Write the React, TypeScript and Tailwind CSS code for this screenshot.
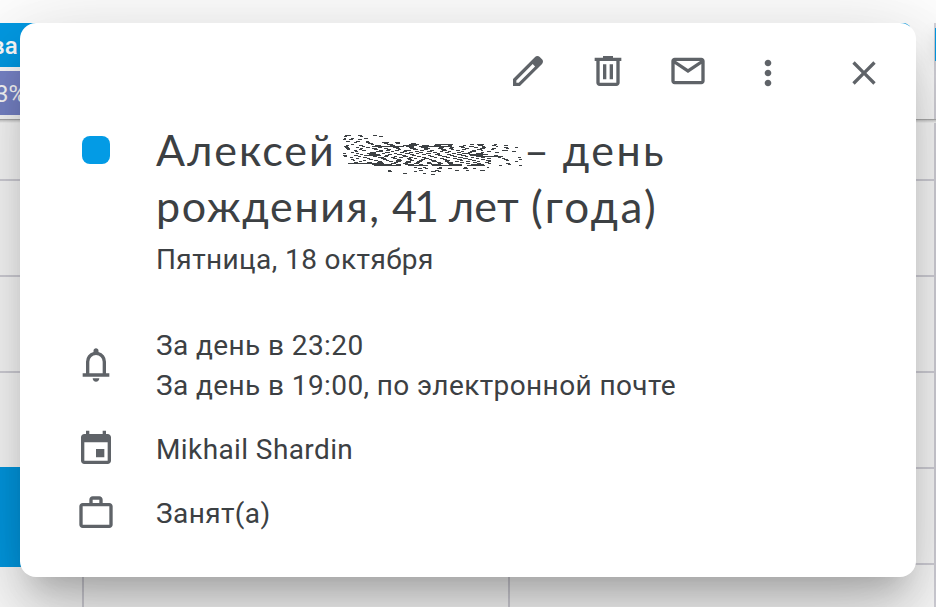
import React from "react";

type IconProps = { d: string; className?: string };

function Icon({ d, className = "" }: IconProps) {
  return (
    <svg viewBox="0 0 24 24" className={`block size-10 shrink-0 fill-[#5f6368] ${className}`}>
      <path d={d} />
    </svg>
  );
}

const icons = {
  edit: "M20.41 4.94l-1.35-1.35c-.78-.78-2.05-.78-2.83 0L3 16.82V21h4.18L20.41 7.77c.79-.78.79-2.05 0-2.83zm-14 14.12L5 19v-1.36l9.82-9.82 1.41 1.41-9.82 9.83z",
  trash: "M15 4V3H9v1H4v2h1v13c0 1.1.9 2 2 2h10c1.1 0 2-.9 2-2V6h1V4h-5zm2 15H7V6h10v13zM9 8h2v9H9zM13 8h2v9h-2z",
  mail: "M20 4H4c-1.1 0-2 .9-2 2v12c0 1.1.9 2 2 2h16c1.1 0 2-.9 2-2V6c0-1.1-.9-2-2-2zm-.8 2L12 10.8 4.8 6h14.4zM4 18V7.87l8 5.33 8-5.33V18H4z",
  more: "M12 8c1.1 0 2-.9 2-2s-.9-2-2-2-2 .9-2 2 .9 2 2 2zm0 2c-1.1 0-2 .9-2 2s.9 2 2 2 2-.9 2-2-.9-2-2-2zm0 6c-1.1 0-2 .9-2 2s.9 2 2 2 2-.9 2-2-.9-2-2-2z",
  close: "M19 6.41L17.59 5 12 10.59 6.41 5 5 6.41 10.59 12 5 17.59 6.41 19 12 13.41 17.59 19 19 17.59 13.41 12z",
  bell: "M4 19v-2h2v-7q0-2.075 1.25-3.687Q8.5 4.7 10.5 4.2v-.7q0-.625.438-1.062Q11.375 2 12 2t1.063.438q.437.437.437 1.062v.7q2 .5 3.25 2.113Q18 7.925 18 10v7h2v2Zm8 3q-.825 0-1.412-.587Q10 20.825 10 20h4q0 .825-.587 1.413Q12.825 22 12 22Zm-4-5h8v-7q0-1.65-1.175-2.825Q13.65 6 12 6q-1.65 0-2.825 1.175Q8 8.35 8 10Z",
  event: "M16 1v2H8V1H6v2H5c-1.11 0-1.99.9-1.99 2L3 19c0 1.1.89 2 2 2h14c1.1 0 2-.9 2-2V5c0-1.1-.9-2-2-2h-1V1h-2zm3 18H5V8h14v11zM12 12h5v5h-5z",
  work: "M20 6h-4V4c0-1.1-.9-2-2-2h-4c-1.1 0-2 .9-2 2v2H4c-1.1 0-2 .9-2 2v11c0 1.1.9 2 2 2h16c1.1 0 2-.9 2-2V8c0-1.1-.9-2-2-2zM10 4h4v2h-4V4zm10 15H4V8h16v11z",
};

// Each row: y, then pairs of x start and length.
const dashes: number[][] = [
  [31, 30, 18, 69, 11, 114, 13],
  [34, 27, 10, 75, 8, 133, 11],
  [40, 26, 8, 48, 8, 88, 12],
  [43, 24, 10, 43, 10, 70, 10],
  [49, 32, 12, 62, 13, 92, 10],
  [52, 58, 9, 93, 13, 140, 12, 152, 10, 180, 14],
  [55, 100, 13, 146, 14, 184, 10, 228, 14],
  [58, 48, 10, 108, 10, 155, 18, 222, 30, 300, 54, 406, 12, 425, 22, 478, 8],
  [61, 33, 9, 73, 12, 120, 18, 165, 16, 205, 40, 262, 20, 296, 22, 340, 12, 384, 10, 430, 13, 470, 14, 508, 10],
  [64, 28, 12, 80, 10, 112, 96, 214, 22, 252, 100, 372, 14, 402, 14, 440, 10, 482, 8],
  [67, 31, 11, 64, 9, 94, 12, 130, 10, 175, 18, 221, 16, 258, 20, 312, 14, 346, 10, 377, 13, 418, 11, 440, 14, 506, 14, 540, 8],
  [70, 34, 10, 76, 9, 112, 13, 146, 12, 182, 14, 226, 18, 266, 18, 308, 16, 342, 12, 390, 11, 434, 15, 470, 12, 513, 9],
  [73, 37, 8, 72, 10, 118, 10, 155, 14, 190, 8, 234, 14, 268, 12, 317, 15, 348, 9, 382, 11, 425, 15, 467, 9],
  [76, 57, 8, 82, 12, 133, 11, 152, 12, 181, 11, 208, 20, 256, 12, 286, 11, 322, 15, 364, 12, 410, 12, 437, 8, 500, 18],
  [79, 60, 10, 124, 20, 168, 10, 204, 12, 241, 12, 276, 14, 314, 10, 340, 9, 378, 10, 406, 16, 456, 12, 530, 12],
  [82, 48, 9, 104, 20, 150, 14, 195, 12, 223, 10, 251, 14, 295, 12, 330, 12, 367, 12, 399, 12, 437, 10, 479, 12],
  [85, 24, 10, 64, 9, 95, 28, 140, 10, 176, 11, 210, 14, 242, 10, 274, 14, 305, 10, 350, 14, 380, 25, 423, 20],
  [88, 75, 9, 102, 32, 160, 12, 187, 13, 226, 10, 260, 12, 300, 14, 336, 12, 365, 16, 401, 58],
  [91, 24, 12, 56, 12, 88, 50, 151, 10, 200, 12, 230, 14, 278, 10, 309, 13, 344, 12, 378, 14, 404, 40, 477, 12],
  [94, 26, 9, 70, 9, 113, 12, 146, 12, 177, 10, 205, 15, 246, 12, 286, 12, 322, 14, 353, 12, 389, 10, 423, 82],
  [97, 45, 10, 84, 13, 128, 18, 168, 12, 193, 10, 221, 13, 261, 13, 296, 10, 332, 14, 369, 16, 407, 10, 438, 12, 489, 10, 548, 9],
  [100, 63, 10, 95, 11, 138, 14, 174, 12, 215, 12, 236, 10, 268, 14, 314, 12, 354, 11, 385, 14, 423, 10, 457, 11, 500, 9],
  [103, 48, 10, 101, 12, 145, 12, 185, 14, 220, 11, 259, 12, 282, 10, 325, 12, 365, 15, 400, 10, 437, 12, 508, 10, 552, 10],
  [106, 53, 8, 84, 10, 116, 13, 152, 10, 184, 16, 225, 12, 252, 12, 288, 16, 331, 13, 375, 10, 412, 12, 454, 14, 514, 9],
  [109, 72, 9, 129, 12, 163, 12, 182, 15, 213, 16, 246, 14, 292, 14, 329, 14, 361, 12, 394, 12, 425, 11, 458, 10, 540, 8],
  [112, 58, 12, 96, 14, 125, 18, 176, 12, 210, 18, 244, 12, 276, 12, 306, 12, 337, 16, 375, 11, 415, 12, 450, 12],
  [115, 38, 108, 169, 14, 205, 14, 238, 14, 276, 14, 310, 14, 339, 14, 392, 12, 425, 13, 459, 9, 514, 10],
  [118, 112, 60, 184, 14, 210, 26, 252, 12, 288, 30, 342, 40, 407, 40, 519, 9],
  [121, 118, 80, 220, 60, 292, 88, 397, 53, 492, 8, 552, 10],
  [127, 238, 8, 263, 11, 312, 10, 388, 9, 455, 8],
  [130, 248, 12, 270, 9, 307, 15, 340, 11, 384, 14, 413, 11],
  [136, 158, 10, 253, 12, 299, 14, 359, 12, 393, 8, 436, 14],
  [139, 160, 12, 237, 9, 289, 14, 308, 10],
  [145, 205, 12, 264, 10],
  [148, 289, 12],
];

function ScrambledName() {
  return (
    <svg viewBox="24 24 543 126" shapeRendering="crispEdges" className="mt-[9px] block h-[42px] w-[181px] shrink-0 fill-[#3c4043]">
      {dashes.map(([y, ...row]) =>
        row.map((x, i) => (i % 2 === 0 ? <rect key={`${y}-${i}`} x={x} y={y - 1} width={row[i + 1]} height="3" /> : null)),
      )}
    </svg>
  );
}

function Rows({ busy = false }: { busy?: boolean }) {
  return (
    <div className="flex flex-col pt-14">
      <div className="h-24 border-t-2 border-[#d5d4dc]" />
      <div className="h-24 border-t-2 border-[#d5d4dc]" />
      <div className="h-24 border-t-2 border-[#d5d4dc]" />
      {busy ? <div className="h-[100px] bg-[#039be5]" /> : <div className="h-24 border-t-2 border-[#d5d4dc]" />}
      {!busy && <div className="h-24 border-t-2 border-[#d5d4dc]" />}
    </div>
  );
}

function CalendarBackdrop() {
  return (
    <div className="flex h-full flex-col overflow-hidden">
      <div className="h-[23px] shrink-0 bg-white" />
      <div className="flex h-24 shrink-0">
        <div className="flex w-[84px] flex-col gap-1 border-r-2 border-[#d5d4dc] font-['Roboto',sans-serif] text-[24px] leading-[46px] text-white">
          <div className="h-11 bg-[#039be5] font-medium"><span className="-ml-[9px] tracking-[0.2px]">ва</span></div>
          <div className="h-11 bg-[#7986cb]"><span className="-ml-[5px]">3%</span></div>
        </div>
        <div className="w-[426px] border-r-2 border-[#d5d4dc]" />
        <div className="w-[424px]"><div className="ml-auto mr-[23px] h-11 w-40 rounded-lg bg-[#039be5]" /></div>
        <div className="w-0.5 bg-[#d5d4dc] pl-px pt-[5px]"><div className="h-[33px] bg-[#039be5] shadow-[0_4px_12px_rgba(0,0,0,0.5)]" /></div>
      </div>
      <div className="flex h-[488px] shrink-0 flex-col">
        <div className="h-px shrink-0 bg-[#afafaf]" />
        <div className="h-[3px] shrink-0 bg-linear-to-b from-[#d0d0d0] to-white" />
        <div className="flex grow">
          <div className="w-[84px] border-r-2 border-[#d5d4dc]"><Rows busy /></div>
          <div className="w-[426px] border-r-2 border-[#d5d4dc]"><Rows /></div>
          <div className="w-[426px] border-r-2 border-[#d5d4dc]"><Rows /></div>
        </div>
      </div>
    </div>
  );
}

export default function App() {
  return (
    <div className="relative h-[607px] w-[936px] overflow-hidden bg-white">
      <CalendarBackdrop />
      <div className="absolute left-5 top-[23px] flex h-[554px] w-[896px] flex-col rounded-2xl bg-white font-['Roboto',sans-serif] text-[28px] tracking-[0.4px] text-[#3c4043] shadow-[0_48px_76px_6px_rgba(0,0,0,0.14),0_18px_92px_16px_rgba(0,0,0,0.12),0_22px_30px_-14px_rgba(0,0,0,0.2)]">
        <div className="flex justify-end gap-10 pr-8 pt-7">
          <Icon d={icons.edit} />
          <Icon d={icons.trash} />
          <Icon d={icons.mail} />
          <Icon d={icons.more} className="mt-0.5" />
          <Icon d={icons.close} className="ml-4 mt-0.5" />
        </div>
        <div className="mt-[31px] flex pl-[62px]">
          <div className="mt-[12px] size-7 rounded-lg bg-[#039be5]" />
          <div className="ml-[46px]">
            <h1 className="font-['Lato',sans-serif] text-[43px] leading-[56px]">
              <span className="flex h-14 whitespace-nowrap">
                <span className="-mt-0.5 w-[187px] tracking-[1.9px]">Алексей</span>
                <ScrambledName />
                <span className="-mt-0.5 tracking-[2.4px] [word-spacing:-2px]">– день</span>
              </span>
              <span className="-mt-0.5 flex h-14 whitespace-nowrap">
                <span className="w-[236px] shrink-0 tracking-[1.6px]">рождения,</span>
                <span className="w-[57px] shrink-0 tracking-[-3px]">41</span>
                <span className="w-[82px] shrink-0 tracking-[0.2px]">лет</span>
                <span className="shrink-0 text-[44px] tracking-[2.4px]">(года)</span>
              </span>
            </h1>
            <p className="mt-1.5 leading-10">Пятница, 18 октября</p>
          </div>
        </div>
        <div className="mt-[46px] flex items-center pl-14">
          <Icon d={icons.bell} className="-translate-y-px" />
          <div className="ml-10 leading-10"><p>За день в 23:20</p><p>За день в 19:00, по электронной почте</p></div>
        </div>
        <div className="mt-6 flex items-center pl-14 leading-10">
          <Icon d={icons.event} className="-translate-y-px" />
          <p className="ml-10">Mikhail Shardin</p>
        </div>
        <div className="mt-6 flex items-center pl-14 leading-10">
          <Icon d={icons.work} className="-translate-y-px" />
          <p className="ml-10">Занят(а)</p>
        </div>
      </div>
    </div>
  );
}
